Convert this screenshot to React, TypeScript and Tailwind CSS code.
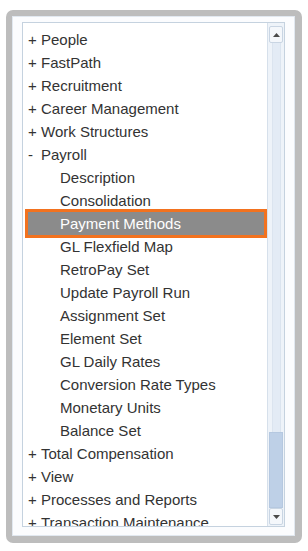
import React from 'react';

type Node = { label: string; level: 0 | 1; sign?: '+' | '-'; selected?: boolean };

const nodes: Node[] = [
    { label: 'People', level: 0, sign: '+' },
    { label: 'FastPath', level: 0, sign: '+' },
    { label: 'Recruitment', level: 0, sign: '+' },
    { label: 'Career Management', level: 0, sign: '+' },
    { label: 'Work Structures', level: 0, sign: '+' },
    { label: 'Payroll', level: 0, sign: '-' },
    { label: 'Description', level: 1 },
    { label: 'Consolidation', level: 1 },
    { label: 'Payment Methods', level: 1, selected: true },
    { label: 'GL Flexfield Map', level: 1 },
    { label: 'RetroPay Set', level: 1 },
    { label: 'Update Payroll Run', level: 1 },
    { label: 'Assignment Set', level: 1 },
    { label: 'Element Set', level: 1 },
    { label: 'GL Daily Rates', level: 1 },
    { label: 'Conversion Rate Types', level: 1 },
    { label: 'Monetary Units', level: 1 },
    { label: 'Balance Set', level: 1 },
    { label: 'Total Compensation', level: 0, sign: '+' },
    { label: 'View', level: 0, sign: '+' },
    { label: 'Processes and Reports', level: 0, sign: '+' },
    { label: 'Transaction Maintenance', level: 0, sign: '+' },
];

function TreeRow({ node }: { node: Node }) {
    if (node.selected) {
        return (
            <div className="h-[23px] ml-[5px] mr-[3px] flex items-center bg-[#8b8b8b] text-white outline-[3px] outline-solid outline-[#f2721f] relative z-10 whitespace-nowrap">
                <span className="pl-[32px]">{node.label}</span>
            </div>
        );
    }
    return (
        <div className="h-[23px] flex items-center text-[#333333] whitespace-nowrap">
            {node.level === 0 ? (
                <>
                    <span className="w-[18px] pl-[5px] shrink-0">{node.sign}</span>
                    <span>{node.label}</span>
                </>
            ) : (
                <span className="pl-[37px]">{node.label}</span>
            )}
        </div>
    );
}

function Scrollbar() {
    return (
        <div className="w-[17px] h-full flex flex-col border-l border-[#d6e0eb] bg-[#eef3f9]">
            <div className="h-[17px] mt-[3px] mx-[1px] rounded-[2px] border border-[#c9d5e3] bg-[#f4f7fb] flex items-center justify-center">
                <svg width="7" height="4" viewBox="0 0 7 4"><path d="M0 4 L3.5 0 L7 4 Z" fill="#4a4a4a" /></svg>
            </div>
            <div className="flex-1 mx-[1px] flex justify-center">
                <div className="w-[9px] h-full bg-[#e3ebf5] border-x border-[#dbe4ef]"></div>
            </div>
            <div className="h-[76px] mx-[1px] bg-[#bed0e7] border border-[#b5c8e0]"></div>
            <div className="h-[17px] mb-[1px] mx-[1px] rounded-[2px] border border-[#c9d5e3] bg-[#f4f7fb] flex items-center justify-center">
                <svg width="7" height="4" viewBox="0 0 7 4"><path d="M0 0 L3.5 4 L7 0 Z" fill="#4a4a4a" /></svg>
            </div>
        </div>
    );
}

export default function App() {
    return (
        <div className="w-[308px] h-[551px] bg-white pt-[10px] pl-[6px]" style={{ fontFamily: '"Liberation Sans", Arial, sans-serif' }}>
            <div className="w-[296px] h-[533px] rounded-[7px] bg-[#bdbdbd] pt-[6px] pl-[6px] pr-[7px] pb-[7px]">
                <div className="w-full h-full bg-[#fbfcfe] border border-[#e1e8f0] pt-[5px] pl-[9px] pr-[9px] pb-[8px]">
                    <div className="w-full h-full border border-[#c5d2df] bg-white flex overflow-hidden">
                        <div className="flex-1 pt-[5px] text-[15px] leading-[23px] overflow-hidden">
                            {nodes.map((n) => (
                                <TreeRow key={n.label} node={n} />
                            ))}
                        </div>
                        <Scrollbar />
                    </div>
                </div>
            </div>
        </div>
    );
}
